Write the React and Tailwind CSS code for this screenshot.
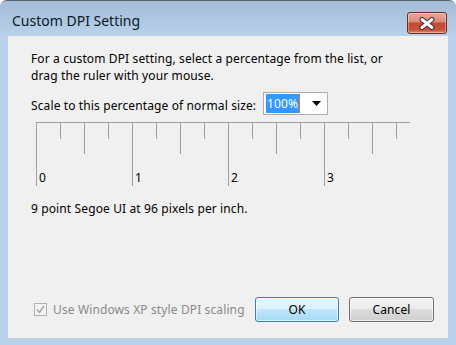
import React from 'react';

const CloseButton = () => (
  <button className="mt-[11px] mr-[9px] w-[40px] h-[22px] rounded-[3px] border border-[#6e2a25] bg-[linear-gradient(#e9a99b_0%,#d98a78_45%,#c4482f_50%,#c8543c_85%,#dc8a6e_100%)] flex items-center justify-center shadow-[inset_0_0_0_1px_rgba(255,255,255,0.35)]">
    <svg width="16" height="13" viewBox="0 0 16 13">
      <path d="M3 2.5 L13 10.5 M13 2.5 L3 10.5" stroke="#4a2a26" strokeWidth="5" strokeLinecap="round" />
      <path d="M3 2.5 L13 10.5 M13 2.5 L3 10.5" stroke="#ffffff" strokeWidth="3" strokeLinecap="round" />
    </svg>
  </button>
);

const Ruler = () => {
  const majors = [0, 96, 192, 288];
  const halves = [48, 144, 240, 336];
  const quarters = [24, 72, 120, 168, 216, 264, 312, 360];
  return (
    <svg width="374" height="64" viewBox="0 0 374 64" className="block">
      <line x1="0" y1="0.5" x2="374" y2="0.5" stroke="#a0a0a0" />
      {majors.map(x => (
        <line key={`m${x}`} x1={x + 0.5} y1="0" x2={x + 0.5} y2="64" stroke="#a0a0a0" />
      ))}
      {halves.map(x => (
        <line key={`h${x}`} x1={x + 0.5} y1="0" x2={x + 0.5} y2="32" stroke="#a0a0a0" />
      ))}
      {quarters.map(x => (
        <line key={`q${x}`} x1={x + 0.5} y1="0" x2={x + 0.5} y2="17" stroke="#a0a0a0" />
      ))}
      {majors.map((x, i) => (
        <text key={`t${x}`} x={x + 3} y="60" fontSize="12" fill="#000" fontFamily="'Noto Sans', sans-serif">{i}</text>
      ))}
    </svg>
  );
};

const App = () => {
  return (
    <div className="w-[456px] h-[345px] bg-[#b9d1ea] rounded-t-[7px] border-t border-[#55616e] flex flex-col font-['Noto_Sans',sans-serif] text-[12px] text-black tracking-[0.12px] overflow-hidden">
      <div className="h-[35px] flex items-start justify-between bg-[linear-gradient(#a3bcd7,#b9d1ea)] rounded-t-[6px]">
        <span className="pl-[12px] pt-[10px] text-[14px] leading-[20px] text-[#0c1826] tracking-normal">Custom DPI Setting</span>
        <CloseButton />
      </div>

      <div className="mx-[8px] h-[302px] bg-[#f0f0f0] flex flex-col">
        <p className="pl-[23px] pt-[14px] leading-[17px]">
          For a custom DPI setting, select a percentage from the list, or<br />
          drag the ruler with your mouse.
        </p>

        <div className="mt-[8px] pl-[23px] flex items-start">
          <span className="w-[232px] mt-[6px] leading-[16px] whitespace-nowrap">Scale to this percentage of normal size:</span>
          <div className="w-[65px] h-[23px] bg-white border border-[#abadb3] flex items-center pl-[2px] pr-[6px]">
            <span className="bg-[#3399ff] text-white leading-[19px] px-[1px]">100%</span>
            <span className="w-[1px] h-[19px] bg-[#e0761a]" />
            <svg width="9" height="5" viewBox="0 0 9 5" className="ml-auto">
              <path d="M0 0 L9 0 L4.5 5 Z" fill="#000" />
            </svg>
          </div>
        </div>

        <div className="mt-[7px] ml-[28px]">
          <Ruler />
        </div>

        <p className="mt-[15px] pl-[23px] leading-[16px]">9 point Segoe UI at 96 pixels per inch.</p>

        <div className="mt-auto pb-[16px] pl-[26px] pr-[14px] flex items-center">
          <div className="flex-1 flex items-center gap-[6px]">
            <span className="w-[13px] h-[13px] border border-[#b1b1b1] bg-[#f4f4f4] flex items-center justify-center">
              <svg width="9" height="9" viewBox="0 0 9 9">
                <path d="M1 4.5 L3.5 7.5 L8 1" stroke="#a8a8a8" strokeWidth="1.6" fill="none" />
              </svg>
            </span>
            <span className="text-[#8a8a8a] leading-[16px]">Use Windows XP style DPI scaling</span>
          </div>
          <button className="w-[84px] h-[25px] rounded-[3px] border border-[#3c7fb1] bg-[linear-gradient(#eaf6fd_0%,#d9f0fc_50%,#bee6fd_50%,#a7d9f5_100%)] shadow-[inset_0_0_0_1px_rgba(255,255,255,0.6)] leading-[16px]">OK</button>
          <button className="ml-[10px] w-[85px] h-[25px] rounded-[3px] border border-[#707070] bg-[linear-gradient(#f2f2f2_0%,#ebebeb_50%,#dddddd_50%,#cfcfcf_100%)] shadow-[inset_0_0_0_1px_rgba(255,255,255,0.6)] leading-[16px]">Cancel</button>
        </div>
      </div>
    </div>
  );
};

export default App;
